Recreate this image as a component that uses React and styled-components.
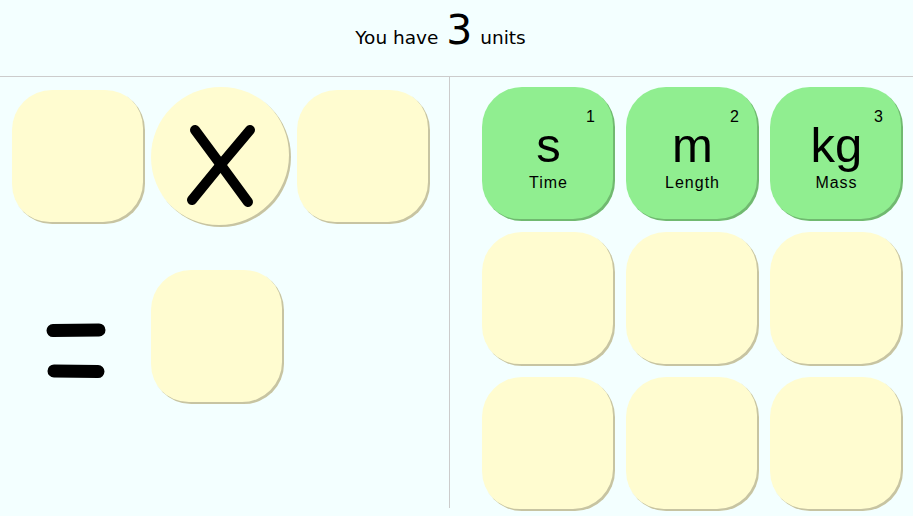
import React from "react";
import styled, { createGlobalStyle } from "styled-components";

const GlobalStyle = createGlobalStyle`
  html, body {
    margin: 0;
    padding: 0;
    background: #f3ffff;
  }
  * { box-sizing: border-box; }
`;

const units = [
  { symbol: "s", name: "Time", n: 1 },
  { symbol: "m", name: "Length", n: 2 },
  { symbol: "kg", name: "Mass", n: 3 },
];

function App() {
  const empty = Array.from({ length: 6 });

  return (
    <>
      <GlobalStyle />
      <Page>
        <Header>
          <Title>
            You have <Count>3</Count> units
          </Title>
        </Header>
        <Board>
          <Workspace>
            <Row>
              <Tile />
              <Operator>
                <svg width="140" height="140" viewBox="0 0 140 140">
                  <path d="M44 43 Q70 78 97 115" stroke="#000" strokeWidth="10" strokeLinecap="round" fill="none" />
                  <path d="M99 43 Q70 77 41 113" stroke="#000" strokeWidth="10" strokeLinecap="round" fill="none" />
                </svg>
              </Operator>
              <Tile />
            </Row>
            <ResultRow>
              <EqualsCell>
                <svg width="60" height="56" viewBox="0 0 60 56">
                  <path d="M7 7.5 L53 7" stroke="#000" strokeWidth="13" strokeLinecap="round" />
                  <path d="M8 48 L52 48.5" stroke="#000" strokeWidth="13" strokeLinecap="round" />
                </svg>
              </EqualsCell>
              <Tile />
            </ResultRow>
          </Workspace>
          <Palette>
            {units.map((u) => (
              <Tile key={u.symbol} $filled>
                <Index>{u.n}</Index>
                <Symbol>{u.symbol}</Symbol>
                <UnitName>{u.name}</UnitName>
              </Tile>
            ))}
            {empty.map((_, i) => (
              <Tile key={i} />
            ))}
          </Palette>
        </Board>
      </Page>
    </>
  );
}

const Page = styled.div`
  width: 913px;
  height: 516px;
  overflow: hidden;
`;

const Header = styled.header`
  height: 77px;
  border-bottom: 1px solid #cccccc;
  display: flex;
  justify-content: center;
  padding-top: 10px;
  padding-right: 32px;
`;

const Title = styled.div`
  font-family: "Comic Sans MS", "DejaVu Sans", sans-serif;
  font-size: 18.5px;
  line-height: 1;
  color: #000;
`;

const Count = styled.span`
  font-size: 41px;
  line-height: 1;
  margin: 0 2px;
`;

const Board = styled.div`
  display: flex;
  height: 431px;
`;

const Workspace = styled.section`
  width: 450px;
  border-right: 1px solid #cccccc;
  padding: 10px 0 0 12px;
  display: flex;
  flex-direction: column;
`;

const Row = styled.div`
  display: flex;
  align-items: center;
  gap: 6px;
`;

const ResultRow = styled.div`
  display: flex;
  align-items: flex-start;
  gap: 6px;
  margin-top: 43px;
`;

const EqualsCell = styled.div`
  width: 133px;
  padding-top: 53px;
  padding-left: 34px;
  svg { display: block; }
`;

const Tile = styled.div`
  position: relative;
  width: 133px;
  height: 134px;
  flex: none;
  border-radius: 40px;
  background: ${(p) => (p.$filled ? "#90ee90" : "#fffcd0")};
  box-shadow: inset -2px -2px 0 rgba(0, 0, 0, 0.22);
  display: flex;
  flex-direction: column;
  align-items: center;
  padding-top: 34px;
  font-family: "Liberation Sans", Arial, sans-serif;
  color: #000;
`;

const Operator = styled.div`
  width: 140px;
  height: 140px;
  flex: none;
  border-radius: 50%;
  background: #fffcd0;
  box-shadow: inset -2px -2px 0 rgba(0, 0, 0, 0.22);
  svg { display: block; }
`;

const Palette = styled.section`
  flex: 1;
  padding: 10px 0 0 32px;
  display: grid;
  grid-template-columns: repeat(3, 133px);
  grid-auto-rows: 134px;
  column-gap: 11px;
  row-gap: 11px;
  align-content: start;
`;

const Index = styled.span`
  position: absolute;
  top: 22px;
  right: 20px;
  font-size: 16px;
  line-height: 1;
`;

const Symbol = styled.div`
  font-size: 49px;
  line-height: 1;
`;

const UnitName = styled.div`
  margin-top: 5px;
  font-size: 16px;
  line-height: 1;
  letter-spacing: 1px;
`;

export default App;
